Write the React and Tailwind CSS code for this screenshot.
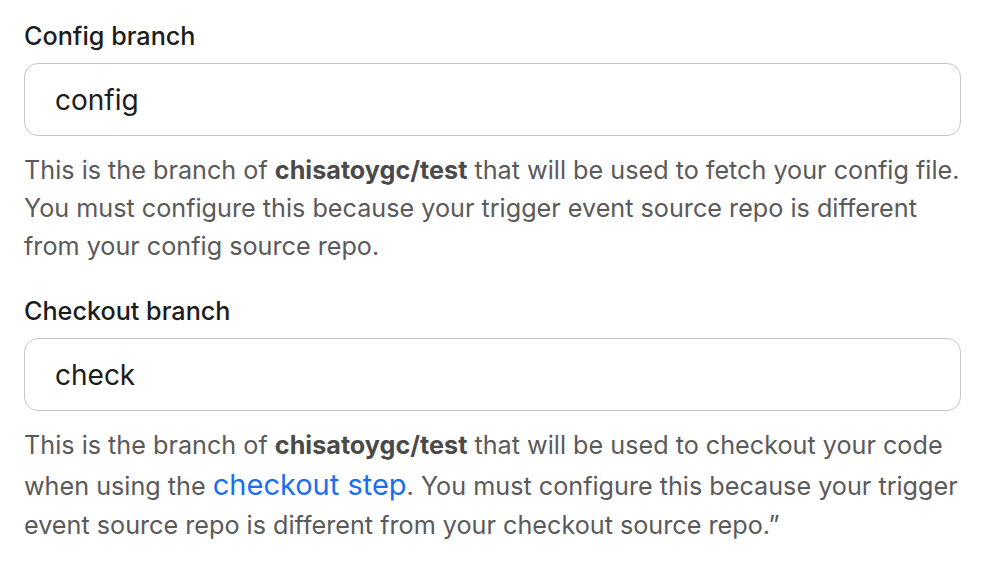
import React from "react";

function Field({ label, value, children }) {
  return (
    <div className="flex flex-col">
      <label className="text-[25.2px] leading-[28px] font-medium text-[#1c1c1c]">{label}</label>
      <div className="mt-[13px] h-[73px] rounded-[14px] border border-[#c6c6c6] bg-white flex items-center px-[30px]">
        <span className="text-[28px] text-[#1c1c1c]">{value}</span>
      </div>
      <p className="mt-[15px] text-[25.2px] leading-[38px] text-[#5a5a5a]">{children}</p>
    </div>
  );
}

export default function App() {
  return (
    <div className="w-[990px] h-[574px] bg-white overflow-hidden" style={{ fontFamily: "Inter, 'Noto Sans', sans-serif" }}>
      <div className="w-[937px] ml-[24px] pt-[22px] flex flex-col gap-[32px]">
        <Field label="Config branch" value="config">
          This is the branch of <b className="font-bold text-[#4a4a4a]">chisatoygc/test</b> that will be used to fetch your config file. You must configure this because your trigger event source repo is different from your config source repo.
        </Field>
        <Field label="Checkout branch" value="check">
          This is the branch of <b className="font-bold text-[#4a4a4a]">chisatoygc/test</b> that will be used to checkout your code when using the{" "}
          <a className="text-[29px] leading-[42px] text-[#1a6ef0]">checkout step</a>. You must configure this because your trigger event source repo is different from your checkout source repo.”
        </Field>
      </div>
    </div>
  );
}
